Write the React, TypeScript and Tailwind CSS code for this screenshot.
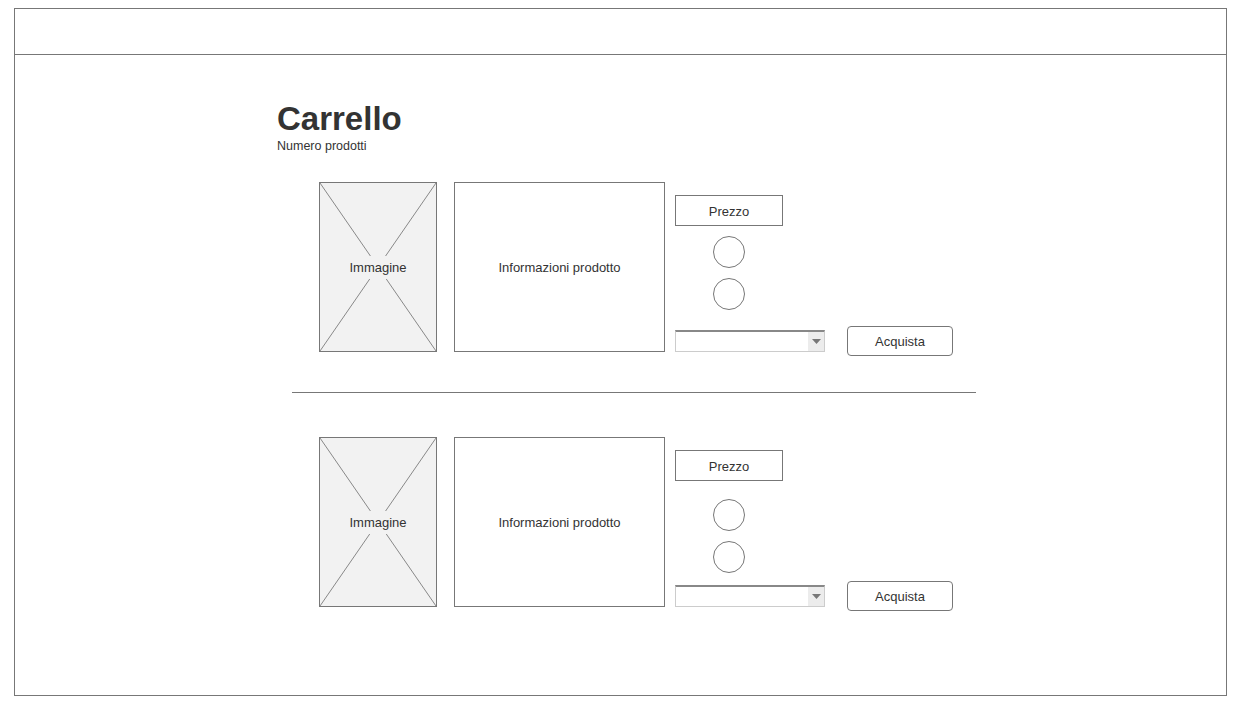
import React from "react";

function ImageBox() {
  return (
    <div className="relative w-[118px] h-[170px] border border-[#777] bg-[#f2f2f2] shrink-0">
      <svg className="absolute inset-0" width="116" height="168" viewBox="0 0 116 168">
        <line x1="0" y1="0" x2="116" y2="168" stroke="#888" strokeWidth="1" />
        <line x1="116" y1="0" x2="0" y2="168" stroke="#888" strokeWidth="1" />
      </svg>
      <div className="absolute inset-0 flex items-center justify-center">
        <span className="bg-[#f2f2f2] px-[2px] py-[4px] text-[13px] leading-[15px] text-[#333]">Immagine</span>
      </div>
    </div>
  );
}

function Circle() {
  return <div className="w-[32px] h-[32px] rounded-full border border-[#777]" />;
}

function Row({ circleGap }: { circleGap: string }) {
  return (
    <div className="flex gap-[17px] ml-[42px]">
      <ImageBox />
      <div className="flex gap-[10px]">
        <div className="w-[211px] h-[170px] pt-[2px] border border-[#777] flex items-center justify-center text-[13px] text-[#333] shrink-0">
          Informazioni prodotto
        </div>
        <div className="flex flex-col h-[170px]">
          <div className="mt-[13px] w-[108px] h-[31px] pt-[2px] border border-[#777] flex items-center justify-center text-[13px] text-[#333]">
            Prezzo
          </div>
          <div className={`flex flex-col items-center gap-[10px] w-[108px] ${circleGap}`}>
            <Circle />
            <Circle />
          </div>
          <div className="mt-auto mb-[-4px] flex items-center gap-[22px] h-[30px]">
            <div className="w-[150px] h-[22px] border-t-2 border-t-[#888] border-x border-b border-x-[#ccc] border-b-[#ccc] flex justify-end">
              <div className="w-[16px] h-full bg-[#ececec] flex items-center justify-center">
                <svg width="9" height="5" viewBox="0 0 9 5">
                  <polygon points="0,0 9,0 4.5,5" fill="#777" />
                </svg>
              </div>
            </div>
            <div className="w-[106px] h-[30px] pt-[2px] border border-[#777] rounded-[4px] flex items-center justify-center text-[13px] text-[#333]">
              Acquista
            </div>
          </div>
        </div>
      </div>
    </div>
  );
}

export default function App() {
  return (
    <div className="w-[1238px] h-[709px] bg-white pt-[8px] pl-[14px]" style={{ fontFamily: '"Liberation Sans", Arial, sans-serif' }}>
      <div className="w-[1213px] h-[688px] border border-[#777]">
        <div className="h-[46px] border-b border-[#777]" />
        <div className="pl-[262px]">
          <div className="pt-[46px]">
            <div className="text-[33px] leading-[36px] font-bold text-[#333]">Carrello</div>
            <div className="mt-[2px] text-[12.5px] leading-[14px] text-[#333]">Numero prodotti</div>
          </div>
          <div className="flex flex-col mt-[29px]">
            <Row circleGap="mt-[10px]" />
            <div className="ml-[15px] mt-[40px] mb-[44px] w-[684px] h-px bg-[#777]" />
            <Row circleGap="mt-[18px]" />
          </div>
        </div>
      </div>
    </div>
  );
}
